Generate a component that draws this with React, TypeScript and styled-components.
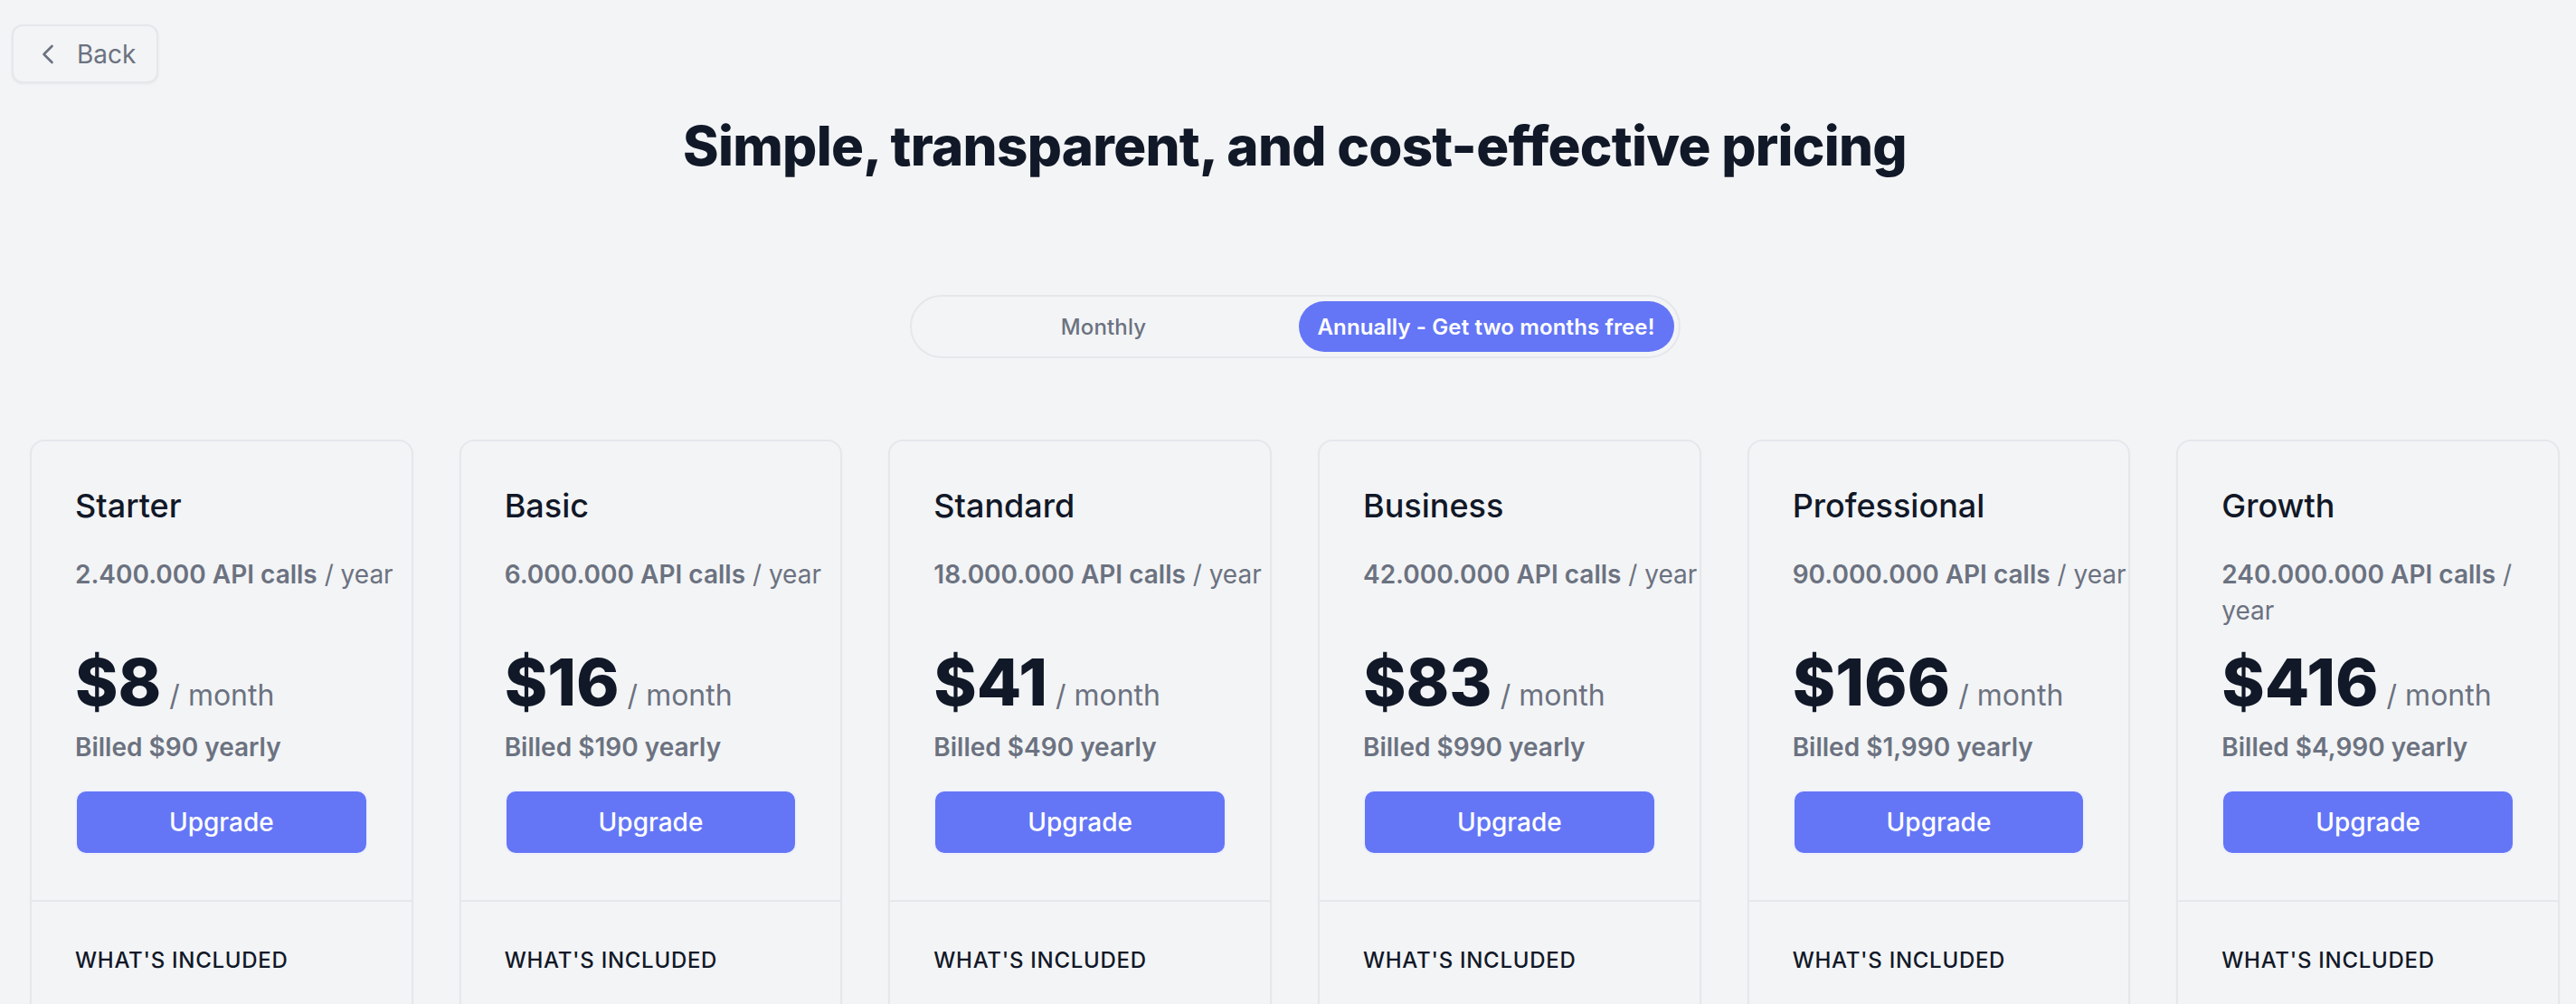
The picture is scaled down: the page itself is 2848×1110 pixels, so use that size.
import React, { useState } from "react";
import styled, { createGlobalStyle } from "styled-components";
import { ChevronLeft } from "lucide-react";

const GlobalStyle = createGlobalStyle`
  html, body {
    margin: 0;
    padding: 0;
    background: #f3f4f6;
    font-family: Inter, "Noto Sans", "Liberation Sans", sans-serif;
    -webkit-font-smoothing: antialiased;
  }
  * { box-sizing: border-box; }
`;

const Page = styled.div`
  min-height: 1110px;
  background: #f3f4f6;
`;

const TopBar = styled.div`
  display: flex;
  padding: 27px 0 0 13px;
`;

const BackButton = styled.button`
  display: flex;
  align-items: center;
  gap: 14px;
  height: 65px;
  padding: 0 23px 0 20px;
  background: #f3f4f6;
  border: 2px solid #e5e7eb;
  border-radius: 12px;
  box-shadow: 0 1px 3px rgba(0, 0, 0, 0.06);
  color: #6b7280;
  font-family: inherit;
  font-size: 28px;
  font-weight: 400;
  cursor: pointer;
`;

const Main = styled.main`
  padding: 0 18px 0 33px;
`;

const Title = styled.h1`
  margin: 33px 0 0;
  text-align: center;
  font-size: 60px;
  line-height: 72px;
  font-weight: 800;
  letter-spacing: -0.012em;
  color: #111827;
`;

const ToggleTrack = styled.div`
  display: flex;
  gap: 8px;
  width: fit-content;
  margin: 129px auto 0;
  padding: 5px;
  border: 2px solid #e5e7eb;
  border-radius: 9999px;
  background: #f3f4f6;
`;

const ToggleOption = styled.button<{ $active?: boolean }>`
  width: 415px;
  height: 56px;
  border: none;
  border-radius: 9999px;
  font-family: inherit;
  font-size: 24px;
  font-weight: ${(p) => (p.$active ? 600 : 500)};
  letter-spacing: 0.005em;
  color: ${(p) => (p.$active ? "#ffffff" : "#6b7280")};
  background: ${(p) => (p.$active ? "#6476f6" : "transparent")};
  cursor: pointer;
`;

const PlanGrid = styled.div`
  display: grid;
  grid-template-columns: repeat(6, minmax(0, 1fr));
  column-gap: 51px;
  margin-top: 90px;
`;

const Card = styled.div`
  display: flex;
  flex-direction: column;
  border: 2px solid #e5e7eb;
  border-radius: 16px;
  background: #f3f4f6;
  box-shadow: 0 1px 2px rgba(0, 0, 0, 0.04);
  overflow: hidden;
`;

const CardTop = styled.div`
  display: flex;
  flex-direction: column;
  padding: 48px 0 50px 48px;
`;

const PlanName = styled.h3`
  margin: 0;
  font-size: 36px;
  line-height: 46px;
  font-weight: 500;
  color: #111827;
`;

const Calls = styled.p`
  margin: 33px 0 0;
  min-height: 80px;
  font-size: 28px;
  line-height: 40px;
  color: #6b7280;
`;

const CallsCount = styled.span`
  font-weight: 600;
`;

const PriceRow = styled.p`
  display: flex;
  align-items: baseline;
  margin: 23px 0 0;
`;

const Amount = styled.span`
  font-size: 72px;
  line-height: 72px;
  font-weight: 800;
  color: #111827;
`;

const Per = styled.span`
  margin-left: 9px;
  font-size: 32px;
  font-weight: 400;
  color: #6b7280;
`;

const Billed = styled.p`
  margin: 16px 0 0;
  font-size: 28px;
  line-height: 40px;
  font-weight: 600;
  color: #6b7280;
`;

const UpgradeButton = styled.button`
  margin: 27px 48px 0 0;
  height: 72px;
  border: 2px solid #eef0fb;
  border-radius: 12px;
  background: #6476f6;
  color: #ffffff;
  font-family: inherit;
  font-size: 28px;
  font-weight: 500;
  cursor: pointer;
`;

const CardBottom = styled.div`
  border-top: 2px solid #e5e7eb;
  padding: 49px 48px 200px;
`;

const IncludedLabel = styled.h4`
  margin: 0;
  font-size: 24px;
  line-height: 32px;
  font-weight: 500;
  letter-spacing: 0.03em;
  text-transform: uppercase;
  color: #111827;
`;

type Plan = {
  name: string;
  calls: string;
  price: string;
  billed: string;
};

const plans: Plan[] = [
  { name: "Starter", calls: "2.400.000", price: "$8", billed: "$90" },
  { name: "Basic", calls: "6.000.000", price: "$16", billed: "$190" },
  { name: "Standard", calls: "18.000.000", price: "$41", billed: "$490" },
  { name: "Business", calls: "42.000.000", price: "$83", billed: "$990" },
  { name: "Professional", calls: "90.000.000", price: "$166", billed: "$1,990" },
  { name: "Growth", calls: "240.000.000", price: "$416", billed: "$4,990" },
];

export default function App() {
  const [annual, setAnnual] = useState(true);
  return (
    <Page>
      <GlobalStyle />
      <TopBar>
        <BackButton>
          <ChevronLeft size={36} strokeWidth={1.75} />
          Back
        </BackButton>
      </TopBar>
      <Main>
        <Title>Simple, transparent, and cost-effective pricing</Title>
        <ToggleTrack>
          <ToggleOption $active={!annual} onClick={() => setAnnual(false)}>
            Monthly
          </ToggleOption>
          <ToggleOption $active={annual} onClick={() => setAnnual(true)}>
            Annually - Get two months free!
          </ToggleOption>
        </ToggleTrack>
        <PlanGrid>
          {plans.map((plan) => (
            <Card key={plan.name}>
              <CardTop>
                <PlanName>{plan.name}</PlanName>
                <Calls>
                  <CallsCount>{plan.calls} API calls</CallsCount> / year
                </Calls>
                <PriceRow>
                  <Amount>{plan.price}</Amount>
                  <Per>/ month</Per>
                </PriceRow>
                <Billed>Billed {plan.billed} yearly</Billed>
                <UpgradeButton>Upgrade</UpgradeButton>
              </CardTop>
              <CardBottom>
                <IncludedLabel>What's included</IncludedLabel>
              </CardBottom>
            </Card>
          ))}
        </PlanGrid>
      </Main>
    </Page>
  );
}
